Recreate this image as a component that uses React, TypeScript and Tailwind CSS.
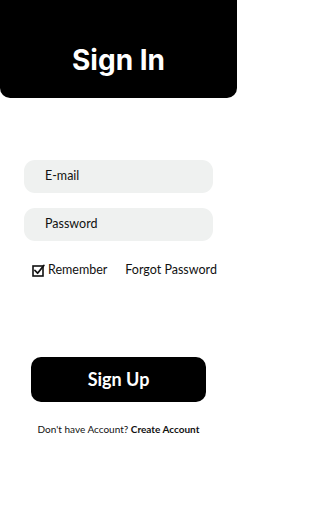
import React from "react";

export default function App() {
  return (
    <div className="w-[237px] h-[512px] bg-white flex flex-col" style={{ fontFamily: "Lato, 'Noto Sans', sans-serif" }}>
      <div className="h-[98px] bg-black rounded-b-[10px] flex items-center justify-center pt-[22px]">
        <h1 className="text-white text-[28px] font-bold leading-none" style={{ fontFamily: "Inter, Lato, sans-serif" }}>Sign In</h1>
      </div>
      <div className="mt-[62px] px-[24px] flex flex-col gap-[15px]">
        <div className="h-[33px] w-[189px] bg-[#eff1f0] rounded-[11px] flex items-center pl-[21px] text-[12.5px] text-[#111]">E-mail</div>
        <div className="h-[33px] w-[189px] bg-[#eff1f0] rounded-[11px] flex items-center pl-[21px] text-[12.5px] text-[#111]">Password</div>
      </div>
      <div className="mt-[20px] flex items-center pl-[32px] text-[12.5px] text-[#111]">
        <svg width="13" height="13" viewBox="0 0 13 13" className="mr-[3px]">
          <rect x="1" y="2" width="10" height="10" fill="none" stroke="#111" strokeWidth="1.6" />
          <path d="M3 6.5 L5.6 9.2 L11.8 1.5" fill="none" stroke="#111" strokeWidth="1.8" strokeLinecap="round" strokeLinejoin="round" />
        </svg>
        <span>Remember</span>
        <span className="ml-[18px]">Forgot Password</span>
      </div>
      <div className="mt-[77px] mx-[31px] h-[45px] bg-black rounded-[10px] flex items-center justify-center">
        <span className="text-white text-[18px] font-bold">Sign Up</span>
      </div>
      <div className="mt-[20px] text-center text-[10px] text-[#111]">
        Don't have Account? <span className="font-bold">Create Account</span>
      </div>
    </div>
  );
}
